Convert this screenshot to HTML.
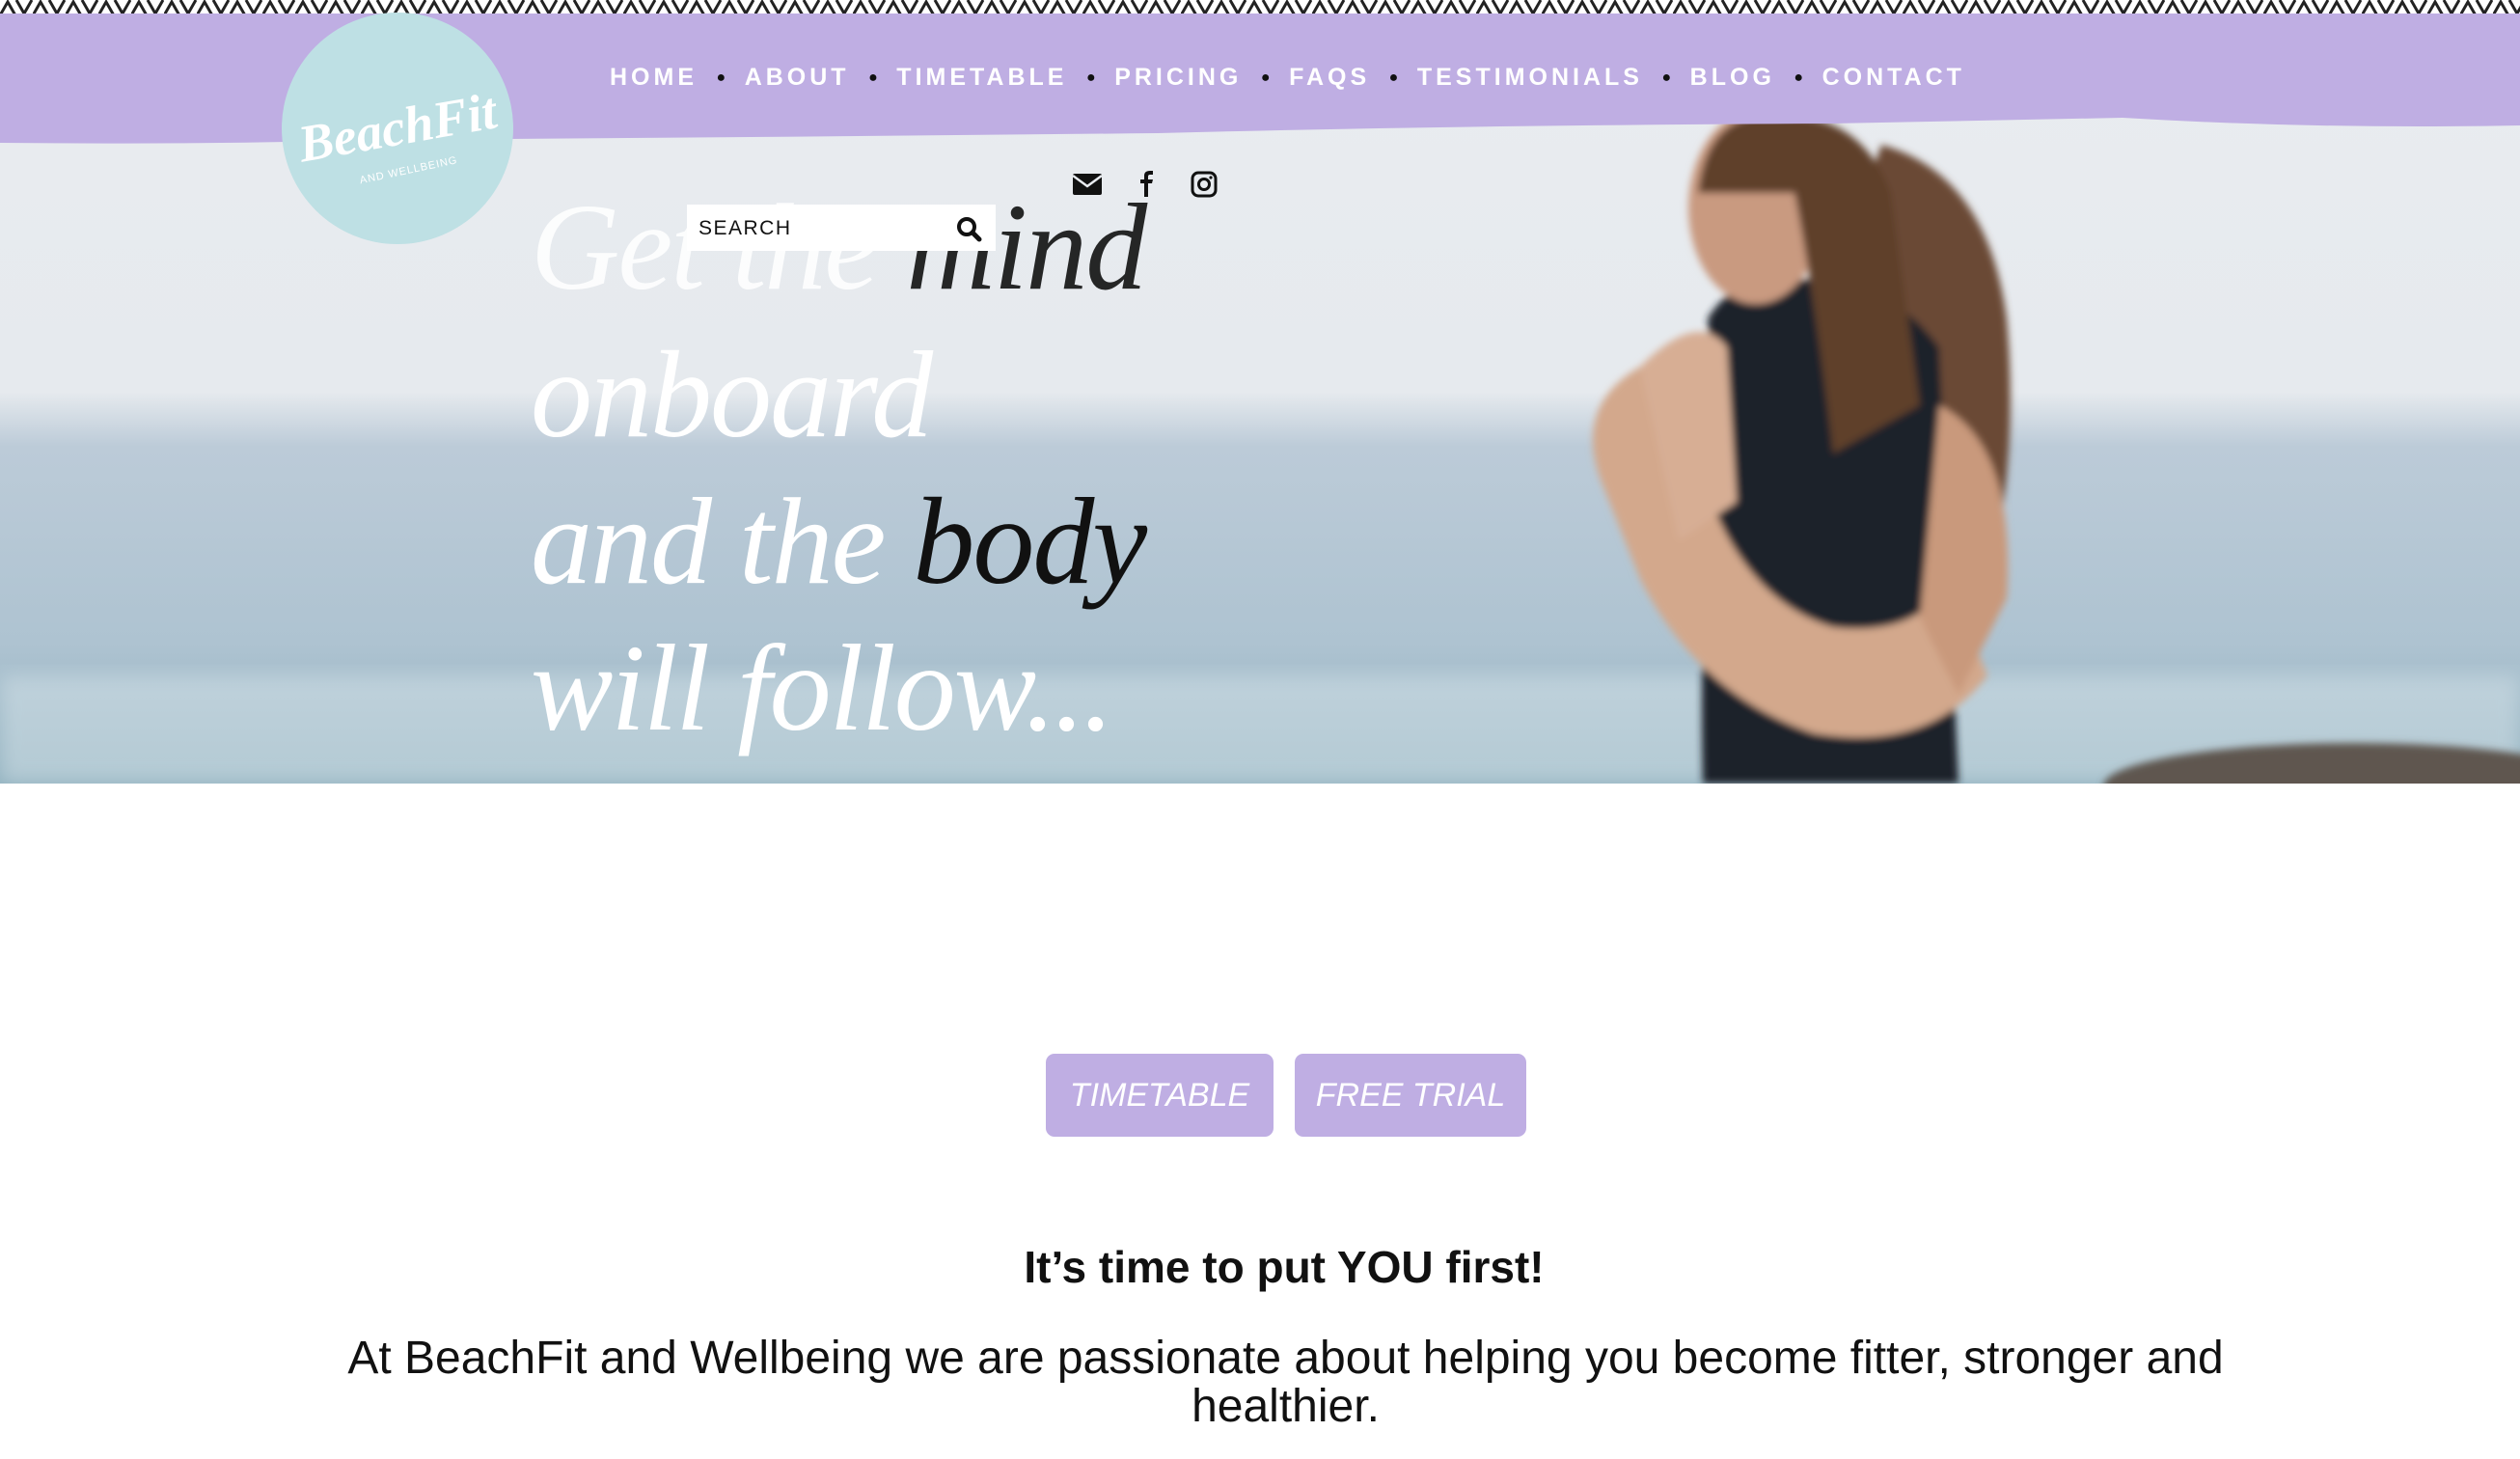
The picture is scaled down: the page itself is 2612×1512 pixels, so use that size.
<!DOCTYPE html>
<html><head><meta charset="utf-8"><style>
*{margin:0;padding:0;box-sizing:border-box}
body{width:2612px;height:1512px;overflow:hidden;background:#fff;font-family:"Liberation Sans",sans-serif;position:relative}
.abs{position:absolute}
.nav{position:absolute;top:66px;left:632px;width:1405px;display:flex;justify-content:space-between;align-items:center;color:#fff;font-weight:bold;font-size:25px;letter-spacing:4px}
.nav i{font-style:normal;font-size:16px;color:#111;letter-spacing:0}
.hero{position:absolute;left:550px;font-family:"Liberation Serif",serif;font-style:italic;font-size:128px;color:#fff;letter-spacing:-2px;line-height:1}
.btn{position:absolute;top:1092px;height:86px;background:#bfaee3;border-radius:9px;color:#fff;font-style:italic;font-size:34px;display:flex;align-items:center;justify-content:center}
</style></head><body>
<svg class="abs" style="left:0;top:0" width="2612" height="812">
<defs>
<pattern id="zz" width="34" height="16" patternUnits="userSpaceOnUse"><rect width="34" height="16" fill="#fff"/><path d="M0 16 L8 2 L16 16 M17 0 L25 14 L33 0" stroke="#222" stroke-width="3" fill="none"/></pattern>
<linearGradient id="sky" x1="0" y1="0" x2="0" y2="1">
<stop offset="0" stop-color="#e9ecf0"/><stop offset="0.5" stop-color="#e6eaee"/><stop offset="0.57" stop-color="#bccbd8"/><stop offset="0.82" stop-color="#aec3d1"/><stop offset="1" stop-color="#8fb0be"/></linearGradient>
<filter id="bl"><feGaussianBlur stdDeviation="10"/></filter>
<filter id="bl2"><feGaussianBlur stdDeviation="4"/></filter>
</defs>
<rect width="2612" height="812" fill="url(#sky)"/>
<rect y="700" width="2612" height="112" fill="#d8e4ea" opacity="0.5" filter="url(#bl)"/>
<g filter="url(#bl2)">
<ellipse cx="2440" cy="815" rx="260" ry="45" fill="#5f564f"/>
<path d="M1950 150 Q2060 180 2080 330 Q2095 500 2050 640 L1980 660 Q1950 400 1900 300Z" fill="#6b4a36"/>
<path d="M1770 330 Q1800 280 1870 290 Q1960 290 2010 360 L2030 812 L1765 812 Q1760 600 1780 500Z" fill="#1c2229"/>
<ellipse cx="1820" cy="215" rx="70" ry="100" fill="#c99a80"/>
<path d="M1760 200 Q1770 110 1850 120 Q1930 120 1960 200 L1990 420 L1900 470 Q1880 300 1860 200Z" fill="#5e3f2c"/>
<path d="M1660 500 Q1630 420 1700 380 Q1740 420 1760 480 Q1800 620 1900 650 Q1990 660 2020 600 L2060 700 Q2000 780 1880 760 Q1760 720 1700 600Z" fill="#d3a88c"/>
<path d="M1700 380 Q1760 320 1790 360 L1800 520 L1740 560Z" fill="#d7ae94"/>
<path d="M2010 420 Q2090 460 2080 620 L2030 720 L1990 640Z" fill="#c9997c"/>
</g>
<path d="M0 14 H2612 V130 Q2400 134 2200 122 L1900 128 Q1500 130 1200 138 Q800 142 400 145 Q200 150 0 148Z" fill="#bfaee3"/>
<rect width="2612" height="14" fill="url(#zz)"/>
<circle cx="412" cy="133" r="120" fill="#bee0e4"/>
<text x="412" y="150" text-anchor="middle" transform="rotate(-10 412 133)" font-family="Liberation Serif,serif" font-style="italic" font-weight="bold" font-size="54" fill="#fff">BeachFit</text>
<text x="422" y="182" text-anchor="middle" transform="rotate(-12 412 170)" font-family="Liberation Sans,sans-serif" font-size="11" fill="#fff" letter-spacing="1">AND WELLBEING</text>
</svg>
<div class="nav"><span>HOME</span><i>●</i><span>ABOUT</span><i>●</i><span>TIMETABLE</span><i>●</i><span>PRICING</span><i>●</i><span>FAQS</span><i>●</i><span>TESTIMONIALS</span><i>●</i><span>BLOG</span><i>●</i><span>CONTACT</span></div>
<div class="hero" style="top:192px;opacity:.9">Get the <span style="color:#111">mind</span></div>
<div class="hero" style="top:345px">onboard</div>
<div class="hero" style="top:497px">and the <span style="color:#111">body</span></div>
<div class="hero" style="top:649px">will follow...</div>
<div class="abs" style="left:712px;top:212px;width:320px;height:48px;background:#fff;font-size:21px;letter-spacing:1.5px;padding:13px 0 0 12px;color:#111">SEARCH
<svg class="abs" style="right:14px;top:11px" width="28" height="28" viewBox="0 0 28 28"><circle cx="12" cy="12" r="8" stroke="#111" stroke-width="4" fill="none"/><path d="M18 18 L25 25" stroke="#111" stroke-width="5" stroke-linecap="round"/></svg></div>
<svg class="abs" style="left:1112px;top:176px" width="160" height="30" viewBox="0 0 160 30">
<rect x="0" y="4" width="30" height="22" rx="2" fill="#111"/><path d="M0 6 L15 17 L30 6" stroke="#e9ecf0" stroke-width="2.5" fill="none"/>
<path d="M74 28 V14 H70 V10 H74 V6 Q74 1 80 1 H83 V5 H80 Q78 5 78 7 V10 H83 L82 14 H78 V28Z" fill="#111"/>
<rect x="124" y="3" width="24" height="24" rx="6" stroke="#111" stroke-width="3" fill="none"/><circle cx="136" cy="15" r="5.5" stroke="#111" stroke-width="3" fill="none"/><circle cx="143" cy="8" r="1.6" fill="#111"/>
</svg>
<div class="btn" style="left:1084px;width:236px">TIMETABLE</div>
<div class="btn" style="left:1342px;width:240px">FREE TRIAL</div>
<div class="abs" style="left:25px;width:2612px;top:1286px;text-align:center;font-weight:bold;font-size:46px;color:#111">It’s time to put YOU first!</div>
<div class="abs" style="left:330px;width:2005px;top:1383px;text-align:center;font-size:48px;line-height:50px;color:#111">At BeachFit and Wellbeing we are passionate about helping you become fitter, stronger and healthier.</div>
</body></html>
